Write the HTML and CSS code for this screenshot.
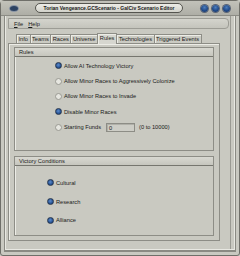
FILE: index.html
```html
<!DOCTYPE html>
<html lang="en">
<head>
    <meta charset="UTF-8">
    <title>GalCiv Scenario Editor</title>
    <link rel="stylesheet" href="styles.css">
</head>
<body>
    <div class="window">
        <div class="titlebar">
            <span class="app-icon"></span>
            <div class="title">Torian Vengeance.GCScenario - GalCiv Scenario Editor</div>
            <div class="buttons">
                <span class="btn"></span>
                <span class="btn"></span>
                <span class="btn"></span>
            </div>
        </div>
        <div class="frame">
            <div class="menubar">
                <span class="menu"><u>F</u>ile</span>
                <span class="menu"><u>H</u>elp</span>
            </div>
            <ul class="tabs">
                <li class="tab">Info</li>
                <li class="tab">Teams</li>
                <li class="tab">Races</li>
                <li class="tab">Universe</li>
                <li class="tab active">Rules</li>
                <li class="tab">Technologies</li>
                <li class="tab">Triggered Events</li>
            </ul>
            <div class="panel">
                <div class="group rules">
                    <div class="group-head">Rules</div>
                    <ul class="options">
                        <li class="option"><span class="radio on"></span>Allow AI Technology Victory</li>
                        <li class="option"><span class="radio"></span>Allow Minor Races to Aggressively Colonize</li>
                        <li class="option"><span class="radio"></span>Allow Minor Races to Invade</li>
                        <li class="option"><span class="radio on"></span>Disable Minor Races</li>
                        <li class="option">
                            <span class="radio"></span><span class="funds-label">Starting Funds</span>
                            <span class="input">0</span>
                            <span class="range">(0 to 10000)</span>
                        </li>
                    </ul>
                </div>
                <div class="group victory">
                    <div class="group-head">Victory Conditions</div>
                    <ul class="options">
                        <li class="option"><span class="radio on"></span>Cultural</li>
                        <li class="option"><span class="radio on"></span>Research</li>
                        <li class="option"><span class="radio on"></span>Alliance</li>
                    </ul>
                </div>
            </div>
        </div>
    </div>
</body>
</html>
```

FILE: styles.css
```css
/* reset */
html, body {
    margin: 0;
    padding: 0;
}
ul, li {
    margin: 0;
    padding: 0;
    list-style: none;
}

body {
    width: 240px;
    height: 256px;
    overflow: hidden;
    background: #c9c9c1;
    font-family: "Liberation Sans", Arial, sans-serif;
    font-size: 5.7px;
    color: #1a1a1a;
}

.window {
    width: 240px;
    height: 256px;
    box-sizing: border-box;
    display: flex;
    flex-direction: column;
    border: 1px solid #6f6f69;
    border-radius: 4px 4px 3px 3px;
    background: #c9c9c1;
}

/* title bar */
.titlebar {
    height: 14px;
    display: flex;
    align-items: center;
    padding: 0 9px 0 9px;
    background: linear-gradient(#c2c2ba, #aeaea6);
    border-bottom: 1px solid #8c8c85;
}
.app-icon {
    width: 8px;
    height: 5px;
    border-radius: 50%;
    background: #2c4262;
    box-shadow: 0 0 0 1px #8893a3;
}
.title {
    margin-left: 17px;
    width: 146px;
    height: 8px;
    line-height: 8px;
    border: 1px solid #55554f;
    border-radius: 5px;
    background: linear-gradient(#ececE6, #d2d2ca);
    font-weight: bold;
    font-size: 5px;
    text-align: center;
    white-space: nowrap;
    overflow: hidden;
}
.buttons {
    margin-left: auto;
    display: flex;
    gap: 4px;
}
.btn {
    width: 7px;
    height: 7px;
    border-radius: 50%;
    background: radial-gradient(circle at 50% 35%, #4f7fbc, #1d4685 60%, #132f5e);
    box-shadow: 0 0 0 1px #5a6474;
}

/* frame body */
.frame {
    flex: 1;
    display: flex;
    flex-direction: column;
    margin: 0 3px 3px 3px;
    border-left: 1px solid #8a8a83;
    border-right: 1px solid #8a8a83;
    border-bottom: 2px solid #8a8a83;
    box-shadow: inset 1px 0 0 #e8e8e2, inset -1px 0 0 #e8e8e2, inset 0 -1px 0 #e8e8e2,
        inset -4px 0 0 #c9c9c1, inset -5px 0 0 #9a9a93;
    padding: 2px 3px 0 3px;
}

.menubar {
    height: 9px;
    display: flex;
    align-items: center;
    gap: 5px;
    padding-left: 5px;
    margin-right: 3px;
    border: 1px solid #9c9c95;
    border-radius: 0 4px 4px 0;
    background: linear-gradient(#d4d4cd, #c4c4bc);
}

/* tabs */
.tabs {
    display: flex;
    margin: 4px 0 0 8px;
    height: 10px;
}
.tab {
    height: 9px;
    margin-top: 1px;
    line-height: 9px;
    padding: 0 1.5px;
    border: 1px solid #8d8d86;
    border-bottom: none;
    box-shadow: inset 1px 1px 0 #ececE6;
    background: #cbcbc3;
    margin-right: -1px;
    white-space: nowrap;
}
.tab.active {
    height: 10px;
    margin-top: 0;
    padding: 0 2px;
    background: #d6d6cf;
    position: relative;
    z-index: 1;
}

.panel {
    flex: 1;
    display: flex;
    flex-direction: column;
    gap: 5px;
    margin-right: 12px;
    margin-bottom: 9px;
    padding: 3px 5px 4px 5px;
    border: 1px solid #8d8d86;
    box-shadow: inset 1px 1px 0 #ececE6;
}

/* group boxes */
.group {
    border: 1px solid #8d8d86;
    box-shadow: inset 1px 1px 0 #ececE6;
}
.group-head {
    height: 8px;
    line-height: 8px;
    padding-left: 4px;
    border-bottom: 1px solid #76766f;
    background: linear-gradient(#d8d8d1, #c6c6be);
}
.rules {
    height: 102px;
}
.victory {
    flex: 1;
}

.options {
    display: flex;
    flex-direction: column;
}
.option {
    display: flex;
    align-items: center;
    height: 15.4px;
    white-space: nowrap;
}
.rules .options {
    padding: 1px 0 0 40px;
}
.victory .options {
    padding: 9px 0 0 32px;
    gap: 3.5px;
}
.radio {
    width: 5px;
    height: 5px;
    margin-right: 2px;
    border-radius: 50%;
    border: 1px solid #9a9a93;
    background: #e6e6e0;
}
.radio.on {
    border-color: #26364e;
    background: radial-gradient(circle at 45% 40%, #5d8ccc, #1e4a8c 70%);
}

.funds-label {
    width: 42px;
}
.input {
    width: 29px;
    height: 9px;
    line-height: 8px;
    padding-left: 2px;
    border: 1px solid #8d8d86;
    box-shadow: inset 1px 1px 0 #b0b0a9;
    background: #cdcdc6;
    box-sizing: border-box;
}
.range {
    margin-left: 4px;
}
```
